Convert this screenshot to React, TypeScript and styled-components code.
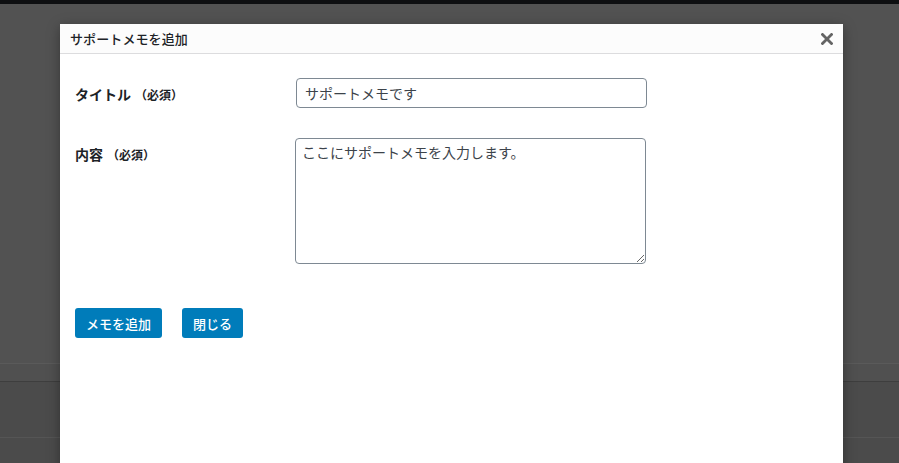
import React from 'react'
import styled, { createGlobalStyle } from 'styled-components'

const Global = createGlobalStyle`
  html, body { margin: 0; padding: 0; }
  body {
    width: 899px;
    height: 463px;
    overflow: hidden;
    background: #525252;
    font-family: "Noto Sans CJK JP", "Noto Sans", "Liberation Sans", sans-serif;
  }
`

// 背景（オーバーレイ越しの管理画面）
const Page = styled.div`
  position: relative;
  width: 899px;
  height: 463px;
  display: flex;
  flex-direction: column;
`

const AdminBar = styled.div`
  height: 4px;
  background: #0e0f11;
`

const Band = styled.div<{ h: number; bg: string; line?: string }>`
  height: ${p => p.h}px;
  background: ${p => p.bg};
  border-top: ${p => (p.line ? `1px solid ${p.line}` : 'none')};
`

const Modal = styled.div`
  position: absolute;
  left: 60px;
  top: 24px;
  width: 783px;
  height: 460px;
  background: #fff;
  box-shadow: 0 3px 12px rgba(0, 0, 0, 0.35);
  display: flex;
  flex-direction: column;
`

const Header = styled.div`
  height: 29px;
  background: #fcfcfc;
  border-bottom: 1px solid #dcdcde;
  display: flex;
  align-items: center;
  justify-content: space-between;
  padding: 0 9px 0 10px;
`

const Title = styled.h1`
  margin: 0;
  font-size: 13px;
  font-weight: 500;
  color: #1d2327;
  letter-spacing: 0.1px;
`

const Close = styled.button`
  border: 0;
  background: none;
  padding: 0;
  width: 14px;
  height: 14px;
  display: flex;
  align-items: center;
  justify-content: center;
  cursor: pointer;
`

const Body = styled.div`
  padding: 24px 15px 0 15px;
  display: flex;
  flex-direction: column;
`

const Row = styled.div<{ gap: number }>`
  display: grid;
  grid-template-columns: 220px 351px;
  margin-bottom: ${p => p.gap}px;
`

const Label = styled.label`
  padding-top: 6px;
  line-height: 20px;
  font-size: 14px;
  font-weight: 600;
  color: #1d2327;
`

const Req = styled.span`
  font-size: 12px;
  margin-left: 4px;
`

const Input = styled.input<{ shift: number }>`
  box-sizing: border-box;
  margin-left: ${p => p.shift}px;
  width: 351px;
  height: 30px;
  border: 1px solid #7e8993;
  border-radius: 4px;
  padding: 0 8px;
  font-family: inherit;
  font-size: 14px;
  color: #3c434a;
  outline: none;
`

const Area = styled.textarea`
  box-sizing: border-box;
  width: 351px;
  height: 126px;
  border: 1px solid #7e8993;
  border-radius: 4px;
  padding: 3px 6px;
  font-family: inherit;
  font-size: 14px;
  line-height: 20px;
  color: #3c434a;
  outline: none;
  resize: both;
`

const Actions = styled.div`
  display: flex;
  gap: 20px;
`

const Button = styled.button<{ w: number }>`
  width: ${p => p.w}px;
  height: 30px;
  border: 0;
  border-radius: 3px;
  background: #007cba;
  color: #fff;
  font-family: inherit;
  font-size: 13px;
  font-weight: 500;
  padding: 0;
  cursor: pointer;
`

const CloseIcon = () => (
  <svg width="12" height="12" viewBox="0 0 12 12">
    <path d="M1.5 1.5 L10.5 10.5 M10.5 1.5 L1.5 10.5" stroke="#646464" strokeWidth="2.8" strokeLinecap="square" />
  </svg>
)

export default function App() {
  return (
    <>
      <Global />
      <Page>
        <AdminBar />
        <Band h={361} bg="#525252" />
        <Band h={17} bg="#505050" line="#5a5a5a" />
        <Band h={55} bg="#4b4b4b" line="#3e3e3e" />
        <Band h={25} bg="#4b4b4b" line="#555555" />

        <Modal>
          <Header>
            <Title>サポートメモを追加</Title>
            <Close aria-label="閉じる"><CloseIcon /></Close>
          </Header>
          <Body>
            <Row gap={30}>
              <Label>タイトル<Req>（必須）</Req></Label>
              <Input shift={1} defaultValue="サポートメモです" />
            </Row>
            <Row gap={44}>
              <Label>内容<Req>（必須）</Req></Label>
              <Area defaultValue="ここにサポートメモを入力します。" />
            </Row>
            <Actions>
              <Button w={87}>メモを追加</Button>
              <Button w={61}>閉じる</Button>
            </Actions>
          </Body>
        </Modal>
      </Page>
    </>
  )
}
